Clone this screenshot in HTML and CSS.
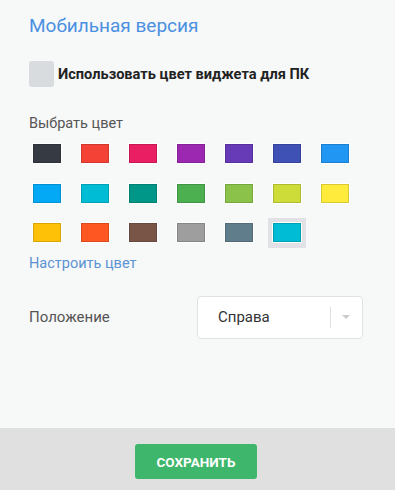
FILE: index.html
```html
<!DOCTYPE html>
<html lang="ru">
<head>
    <meta charset="UTF-8">
    <meta name="viewport" content="width=device-width, initial-scale=1.0">
    <title>Мобильная версия</title>
    <link rel="stylesheet" href="styles.css">
</head>
<body>
    <div class="content">
        <h1 class="title">Мобильная версия</h1>

        <label class="check">
            <span class="check-box"></span>
            <span class="check-label">Использовать цвет виджета для ПК</span>
        </label>

        <div class="section-label">Выбрать цвет</div>
        <div class="colors">
            <div class="color"><span class="swatch" style="background:#363a42"></span></div>
            <div class="color"><span class="swatch" style="background:#f44336"></span></div>
            <div class="color"><span class="swatch" style="background:#e91e63"></span></div>
            <div class="color"><span class="swatch" style="background:#9c27b0"></span></div>
            <div class="color"><span class="swatch" style="background:#673ab7"></span></div>
            <div class="color"><span class="swatch" style="background:#3f51b5"></span></div>
            <div class="color"><span class="swatch" style="background:#2196f3"></span></div>
            <div class="color"><span class="swatch" style="background:#03a9f4"></span></div>
            <div class="color"><span class="swatch" style="background:#00bcd4"></span></div>
            <div class="color"><span class="swatch" style="background:#009688"></span></div>
            <div class="color"><span class="swatch" style="background:#4caf50"></span></div>
            <div class="color"><span class="swatch" style="background:#8bc34a"></span></div>
            <div class="color"><span class="swatch" style="background:#cddc39"></span></div>
            <div class="color"><span class="swatch" style="background:#ffeb3b"></span></div>
            <div class="color"><span class="swatch" style="background:#ffc107"></span></div>
            <div class="color"><span class="swatch" style="background:#ff5722"></span></div>
            <div class="color"><span class="swatch" style="background:#795548"></span></div>
            <div class="color"><span class="swatch" style="background:#9e9e9e"></span></div>
            <div class="color"><span class="swatch" style="background:#607d8b"></span></div>
            <div class="color selected"><span class="swatch" style="background:#00bcd4"></span></div>
        </div>
        <a class="custom-link">Настроить цвет</a>

        <div class="position-row">
            <span class="position-label">Положение</span>
            <div class="select">
                <span class="select-value">Справа</span>
                <span class="select-sep"></span>
                <span class="select-arrow"></span>
            </div>
        </div>
    </div>

    <div class="footer">
        <button class="save-btn">СОХРАНИТЬ</button>
    </div>
</body>
</html>
```

FILE: styles.css
```css
body {
    margin: 0;
    font-family: Roboto, "Liberation Sans", sans-serif;
    background-color: #f7f8f8;
    display: flex;
    flex-direction: column;
    min-height: 100vh;
}

.content {
    flex: 1;
    padding: 13px 29px 0 29px;
}

.title {
    margin: 0;
    font-size: 19px;
    font-weight: 400;
    color: #4a90e2;
    line-height: 26px;
}

.check {
    display: flex;
    align-items: center;
    margin-top: 22px;
}

.check-box {
    width: 25px;
    height: 26px;
    background-color: #d8dcdf;
    border-radius: 3px;
    margin-right: 4px;
}

.check-label {
    font-size: 14.6px;
    font-weight: 700;
    color: #222;
}

.section-label {
    margin-top: 28px;
    font-size: 14.5px;
    color: #555;
}

.colors {
    display: grid;
    grid-template-columns: repeat(7, 38px);
    grid-auto-rows: 29.5px;
    column-gap: 10px;
    row-gap: 10px;
    margin: 7px 0 0 -1px;
}

.color {
    display: flex;
    align-items: center;
    justify-content: center;
}

.color.selected {
    background-color: #e2e2e6;
}

.swatch {
    width: 28px;
    height: 19px;
    box-sizing: border-box;
    border: 1px solid rgba(0, 0, 0, 0.15);
    box-shadow: 0 0 0 1px #fff;
}

.custom-link {
    display: block;
    margin-top: 7px;
    font-size: 14.5px;
    color: #5b93d3;
}

.position-row {
    display: flex;
    align-items: center;
    justify-content: space-between;
    margin-top: 24px;
    padding-right: 3px;
}

.position-label {
    font-size: 15px;
    color: #555;
}

.select {
    width: 166px;
    height: 43px;
    box-sizing: border-box;
    background-color: #fff;
    border: 1px solid #e2e2e2;
    border-radius: 4px;
    display: flex;
    align-items: center;
    padding-left: 20px;
}

.select-value {
    flex: 1;
    font-size: 15px;
    color: #333;
}

.select-sep {
    width: 1px;
    height: 21px;
    background-color: #e0e0e0;
}

.select-arrow {
    width: 0;
    height: 0;
    border-left: 4px solid transparent;
    border-right: 4px solid transparent;
    border-top: 4px solid #ccc;
    margin: 0 12px 0 11px;
}

.footer {
    height: 62px;
    background-color: #e0e0e0;
    display: flex;
    justify-content: center;
    padding-top: 16px;
    padding-right: 3px;
    box-sizing: border-box;
}

.save-btn {
    width: 122px;
    height: 35px;
    background-color: #3eb66b;
    color: #fff;
    border: none;
    border-radius: 3px;
    font-family: Roboto, "Liberation Sans", sans-serif;
    font-size: 13.5px;
    font-weight: 700;
    cursor: pointer;
}
```
